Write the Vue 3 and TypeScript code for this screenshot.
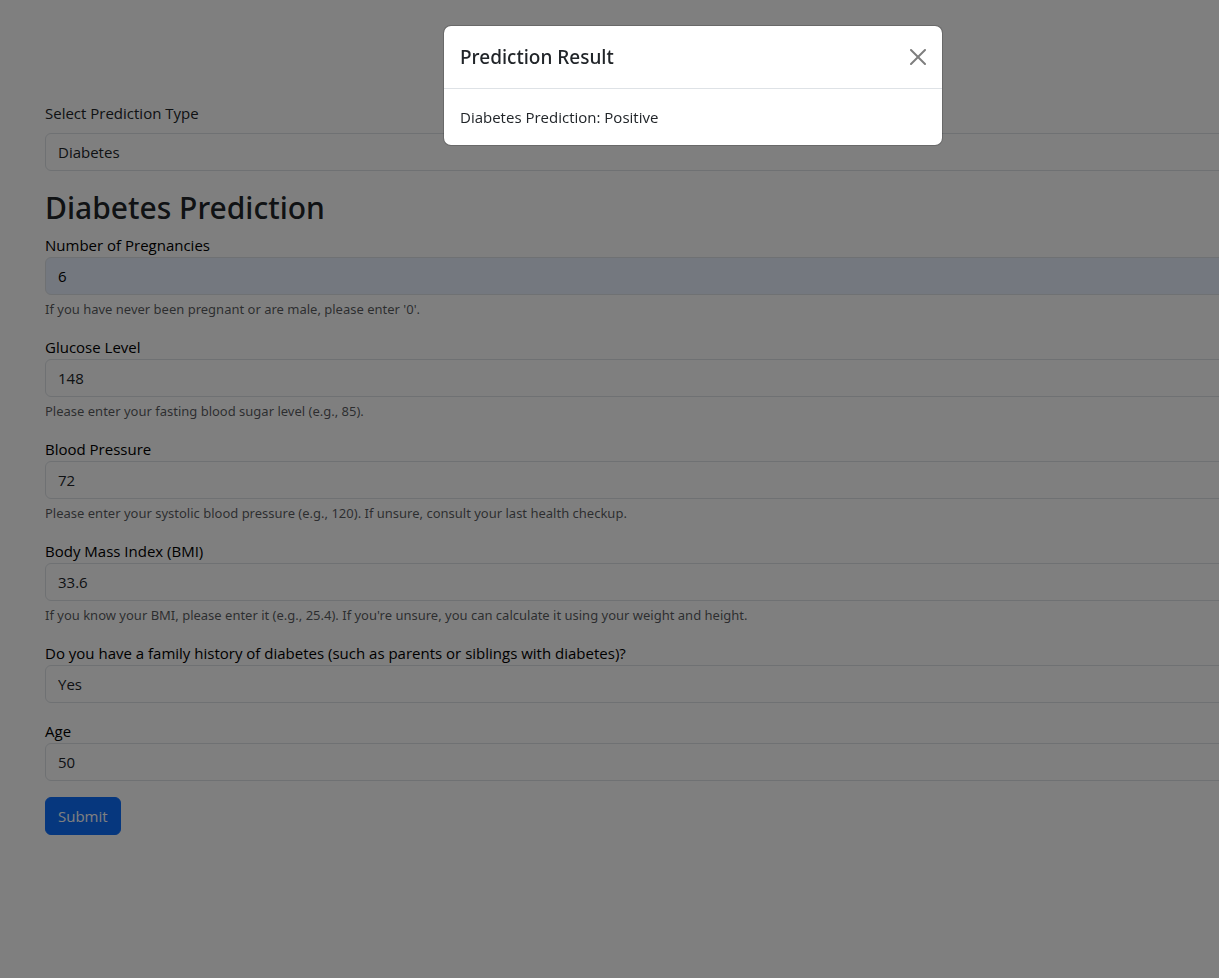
<script setup lang="ts">
import { ref } from 'vue'

interface Field {
  id: string
  label: string
  value: string
  hint?: string
  options?: string[]
  filled?: boolean
}

const predictionType = ref('Diabetes')
const modalOpen = ref(true)

const fields = ref<Field[]>([
  {
    id: 'pregnancies',
    label: 'Number of Pregnancies',
    value: '6',
    hint: "If you have never been pregnant or are male, please enter '0'.",
    filled: true,
  },
  {
    id: 'glucose',
    label: 'Glucose Level',
    value: '148',
    hint: 'Please enter your fasting blood sugar level (e.g., 85).',
  },
  {
    id: 'pressure',
    label: 'Blood Pressure',
    value: '72',
    hint: 'Please enter your systolic blood pressure (e.g., 120). If unsure, consult your last health checkup.',
  },
  {
    id: 'bmi',
    label: 'Body Mass Index (BMI)',
    value: '33.6',
    hint: "If you know your BMI, please enter it (e.g., 25.4). If you're unsure, you can calculate it using your weight and height.",
  },
  {
    id: 'history',
    label: 'Do you have a family history of diabetes (such as parents or siblings with diabetes)?',
    value: 'Yes',
    options: ['Yes', 'No'],
  },
  { id: 'age', label: 'Age', value: '50' },
])
</script>

<template>
  <div class="page">
    <main class="content">
      <div class="type-picker">
        <label for="prediction-type">Select Prediction Type</label>
        <select id="prediction-type" v-model="predictionType" class="control">
          <option>Diabetes</option>
        </select>
      </div>

      <h2>Diabetes Prediction</h2>
      <form @submit.prevent="modalOpen = true">
        <div v-for="field in fields" :key="field.id" class="field">
          <label :for="field.id">{{ field.label }}</label>
          <select v-if="field.options" :id="field.id" v-model="field.value" class="control">
            <option v-for="option in field.options" :key="option">{{ option }}</option>
          </select>
          <input
            v-else
            :id="field.id"
            v-model="field.value"
            type="text"
            class="control"
            :class="{ filled: field.filled }"
          />
          <small v-if="field.hint" class="hint">{{ field.hint }}</small>
        </div>
        <button type="submit" class="submit">Submit</button>
      </form>
    </main>

    <div v-if="modalOpen" class="backdrop">
      <section class="modal" role="dialog" aria-modal="true" aria-labelledby="modal-title">
        <header class="modal-header">
          <h5 id="modal-title">Prediction Result</h5>
          <button type="button" class="close" aria-label="Close" @click="modalOpen = false">
            <svg viewBox="0 0 16 16" width="16" height="16" aria-hidden="true">
              <path
                d="M.293.293a1 1 0 0 1 1.414 0L8 6.586 14.293.293a1 1 0 1 1 1.414 1.414L9.414 8l6.293 6.293a1 1 0 0 1-1.414 1.414L8 9.414l-6.293 6.293a1 1 0 0 1-1.414-1.414L6.586 8 .293 1.707a1 1 0 0 1 0-1.414z"
              />
            </svg>
          </button>
        </header>
        <div class="modal-body">Diabetes Prediction: Positive</div>
      </section>
    </div>
  </div>
</template>

<style>
body {
  margin: 0;
  background: #fff;
}
</style>

<style scoped>
.page {
  --overhang: 167px;
  box-sizing: border-box;
  min-height: 100vh;
  overflow: hidden;
  color: #212529;
  font-family: 'Segoe UI', 'Open Sans', 'Noto Sans', sans-serif;
  font-size: 15px;
  line-height: 24px;
}

.page *,
.page *::before {
  box-sizing: border-box;
}

.content {
  margin-right: calc(-1 * var(--overhang));
  padding: 101px 45px 48px;
}

.type-picker {
  display: flex;
  flex-direction: column;
  gap: 8px;
  margin-bottom: 16px;
}

h2,
h5,
.hint {
  font-family: 'Segoe UI', 'Noto Sans', 'Open Sans', sans-serif;
}

h2 {
  margin: 0 0 4px;
  font-size: 30px;
  font-weight: 500;
  line-height: 42px;
}

.field {
  display: flex;
  flex-direction: column;
  margin-bottom: 16px;
}

.field label {
  color: #000;
}

.control {
  width: 100%;
  height: 38px;
  margin: 0;
  padding: 6px 12px;
  appearance: none;
  border: 1px solid #dee2e6;
  border-radius: 6px;
  background: #fff;
  color: #212529;
  font: inherit;
}

.control.filled {
  background: #e8f0fe;
  color: #000;
}

.hint {
  margin-top: 4px;
  color: rgba(33, 37, 41, 0.75);
  font-size: 13px;
  line-height: 20px;
}

.submit {
  height: 38px;
  padding: 6px 12px;
  border: 1px solid #0d6efd;
  border-radius: 6px;
  background: #0d6efd;
  color: #fff;
  font: inherit;
}

.backdrop {
  position: fixed;
  inset: 0 calc(-1 * var(--overhang)) 0 0;
  display: flex;
  align-items: flex-start;
  justify-content: center;
  padding-top: 25px;
  background: rgba(0, 0, 0, 0.5);
}

.modal {
  width: 500px;
  border: 1px solid rgba(0, 0, 0, 0.175);
  border-radius: 8px;
  background: #fff;
  background-clip: padding-box;
}

.modal-header {
  display: flex;
  align-items: center;
  justify-content: space-between;
  padding: 16px;
  border-bottom: 1px solid #dee2e6;
}

h5 {
  margin: 0;
  font-size: 19px;
  font-weight: 500;
  line-height: 30px;
}

.close {
  display: flex;
  padding: 0;
  border: 0;
  background: none;
  color: #000;
  opacity: 0.5;
}

.close svg {
  fill: currentColor;
}

.modal-body {
  padding: 16px;
}
</style>
